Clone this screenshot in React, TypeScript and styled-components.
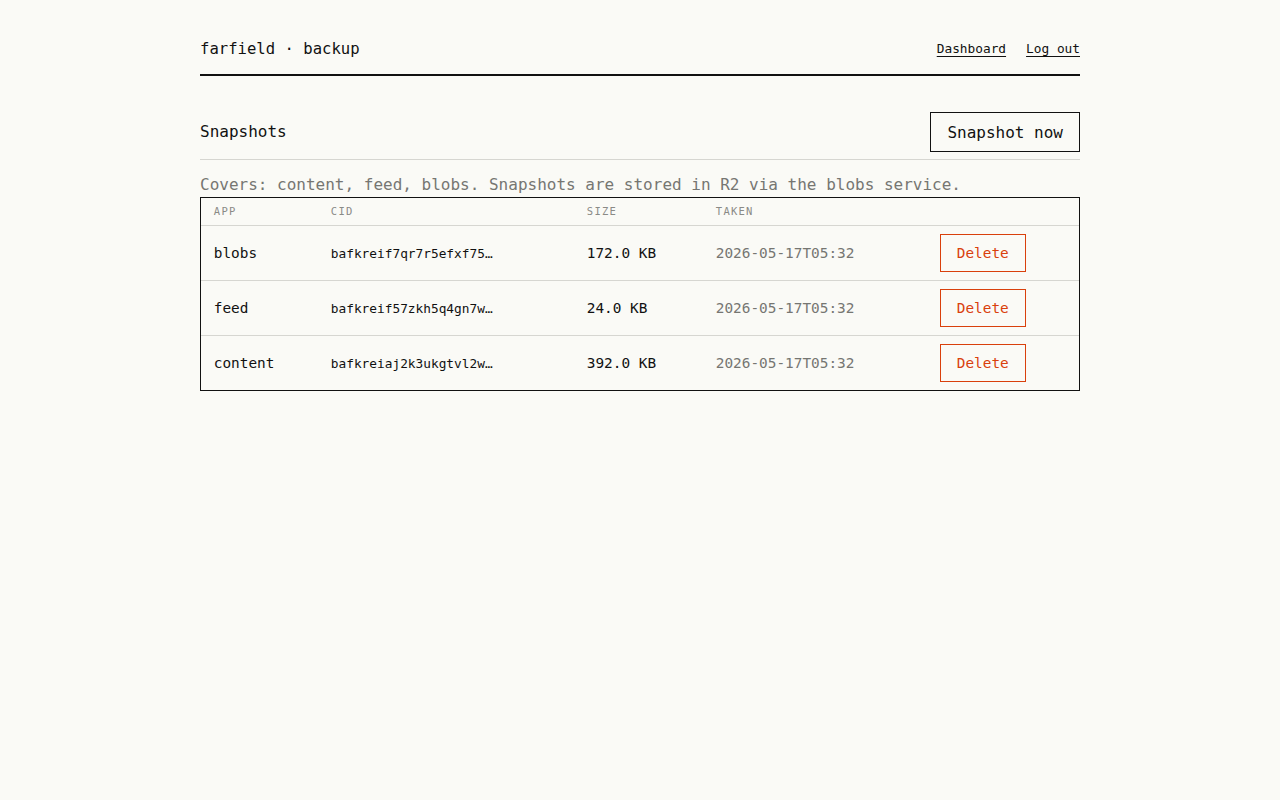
import React from 'react'
import styled, { createGlobalStyle } from 'styled-components'

const GlobalStyle = createGlobalStyle`
  html, body {
    margin: 0;
    padding: 0;
    background: #fafaf6;
    color: #111;
    font-family: "DejaVu Sans Mono", "Liberation Mono", monospace;
  }
`

const Page = styled.div`
  width: 880px;
  margin: 0 auto;
  padding-top: 36px;
`

const Header = styled.header`
  display: flex;
  align-items: center;
  justify-content: space-between;
  height: 24px;
  padding-bottom: 14px;
  border-bottom: 2px solid #111;
`

const Brand = styled.div`
  font-size: 15.6px;
  line-height: 24px;
  padding-top: 1px;
`

const Nav = styled.nav`
  display: flex;
  gap: 20px;
`

const NavLink = styled.a`
  font-size: 12.8px;
  color: #111;
  text-decoration: underline;
  text-underline-offset: 3px;
`

const Main = styled.main`
  margin-top: 36px;
`

const SectionHead = styled.div`
  display: flex;
  align-items: center;
  justify-content: space-between;
  padding-bottom: 7px;
  border-bottom: 1px solid #d6d6d1;
`

const SectionTitle = styled.h2`
  margin: 0 0 2px;
  font-size: 16px;
  font-weight: normal;
`

const Button = styled.button<{ $danger?: boolean }>`
  font-family: inherit;
  background: transparent;
  cursor: pointer;
  border: 1px solid ${(p) => (p.$danger ? '#d9400c' : '#111')};
  color: ${(p) => (p.$danger ? '#d9400c' : '#111')};
  font-size: ${(p) => (p.$danger ? '14.4px' : '16px')};
  height: ${(p) => (p.$danger ? '38px' : '40px')};
  padding: 0 16px;
`

const Note = styled.p`
  margin: 13px 0 0;
  font-size: 16px;
  line-height: 24px;
  color: #767672;
`

const Table = styled.table`
  width: 100%;
  border-collapse: separate;
  border-spacing: 0;
  border: 1px solid #111;
`

const Th = styled.th`
  text-align: left;
  font-weight: normal;
  font-size: 10.5px;
  letter-spacing: 0.12em;
  line-height: 11px;
  text-transform: uppercase;
  color: #8a8a86;
  padding: 8px 12.8px;
  border-bottom: 1px solid #d6d6d1;
`

const Row = styled.tr`
  &:not(:last-child) > td {
    border-bottom: 1px solid #d6d6d1;
  }
`

const Td = styled.td<{ $muted?: boolean; $small?: boolean }>`
  padding: 8px 12.8px;
  vertical-align: middle;
  font-size: ${(p) => (p.$small ? '12.8px' : '14.4px')};
  color: ${(p) => (p.$muted ? '#767672' : '#111')};
  height: 38px;
`

const snapshots = [
  { app: 'blobs', cid: 'bafkreif7qr7r5efxf75…', size: '172.0 KB', taken: '2026-05-17T05:32' },
  { app: 'feed', cid: 'bafkreif57zkh5q4gn7w…', size: '24.0 KB', taken: '2026-05-17T05:32' },
  { app: 'content', cid: 'bafkreiaj2k3ukgtvl2w…', size: '392.0 KB', taken: '2026-05-17T05:32' },
]

export default function App() {
  return (
    <>
      <GlobalStyle />
      <Page>
        <Header>
          <Brand>farfield · backup</Brand>
          <Nav>
            <NavLink href="#">Dashboard</NavLink>
            <NavLink href="#">Log out</NavLink>
          </Nav>
        </Header>
        <Main>
          <SectionHead>
            <SectionTitle>Snapshots</SectionTitle>
            <Button>Snapshot now</Button>
          </SectionHead>
          <Note>Covers: content, feed, blobs. Snapshots are stored in R2 via the blobs service.</Note>
          <Table>
            <colgroup>
              <col style={{ width: 117 }} />
              <col style={{ width: 256 }} />
              <col style={{ width: 129 }} />
              <col style={{ width: 224 }} />
              <col />
            </colgroup>
            <thead>
              <tr>
                <Th>App</Th>
                <Th>CID</Th>
                <Th>Size</Th>
                <Th>Taken</Th>
                <Th />
              </tr>
            </thead>
            <tbody>
              {snapshots.map((s) => (
                <Row key={s.app}>
                  <Td>{s.app}</Td>
                  <Td $small>{s.cid}</Td>
                  <Td>{s.size}</Td>
                  <Td $muted>{s.taken}</Td>
                  <Td>
                    <Button $danger>Delete</Button>
                  </Td>
                </Row>
              ))}
            </tbody>
          </Table>
        </Main>
      </Page>
    </>
  )
}
